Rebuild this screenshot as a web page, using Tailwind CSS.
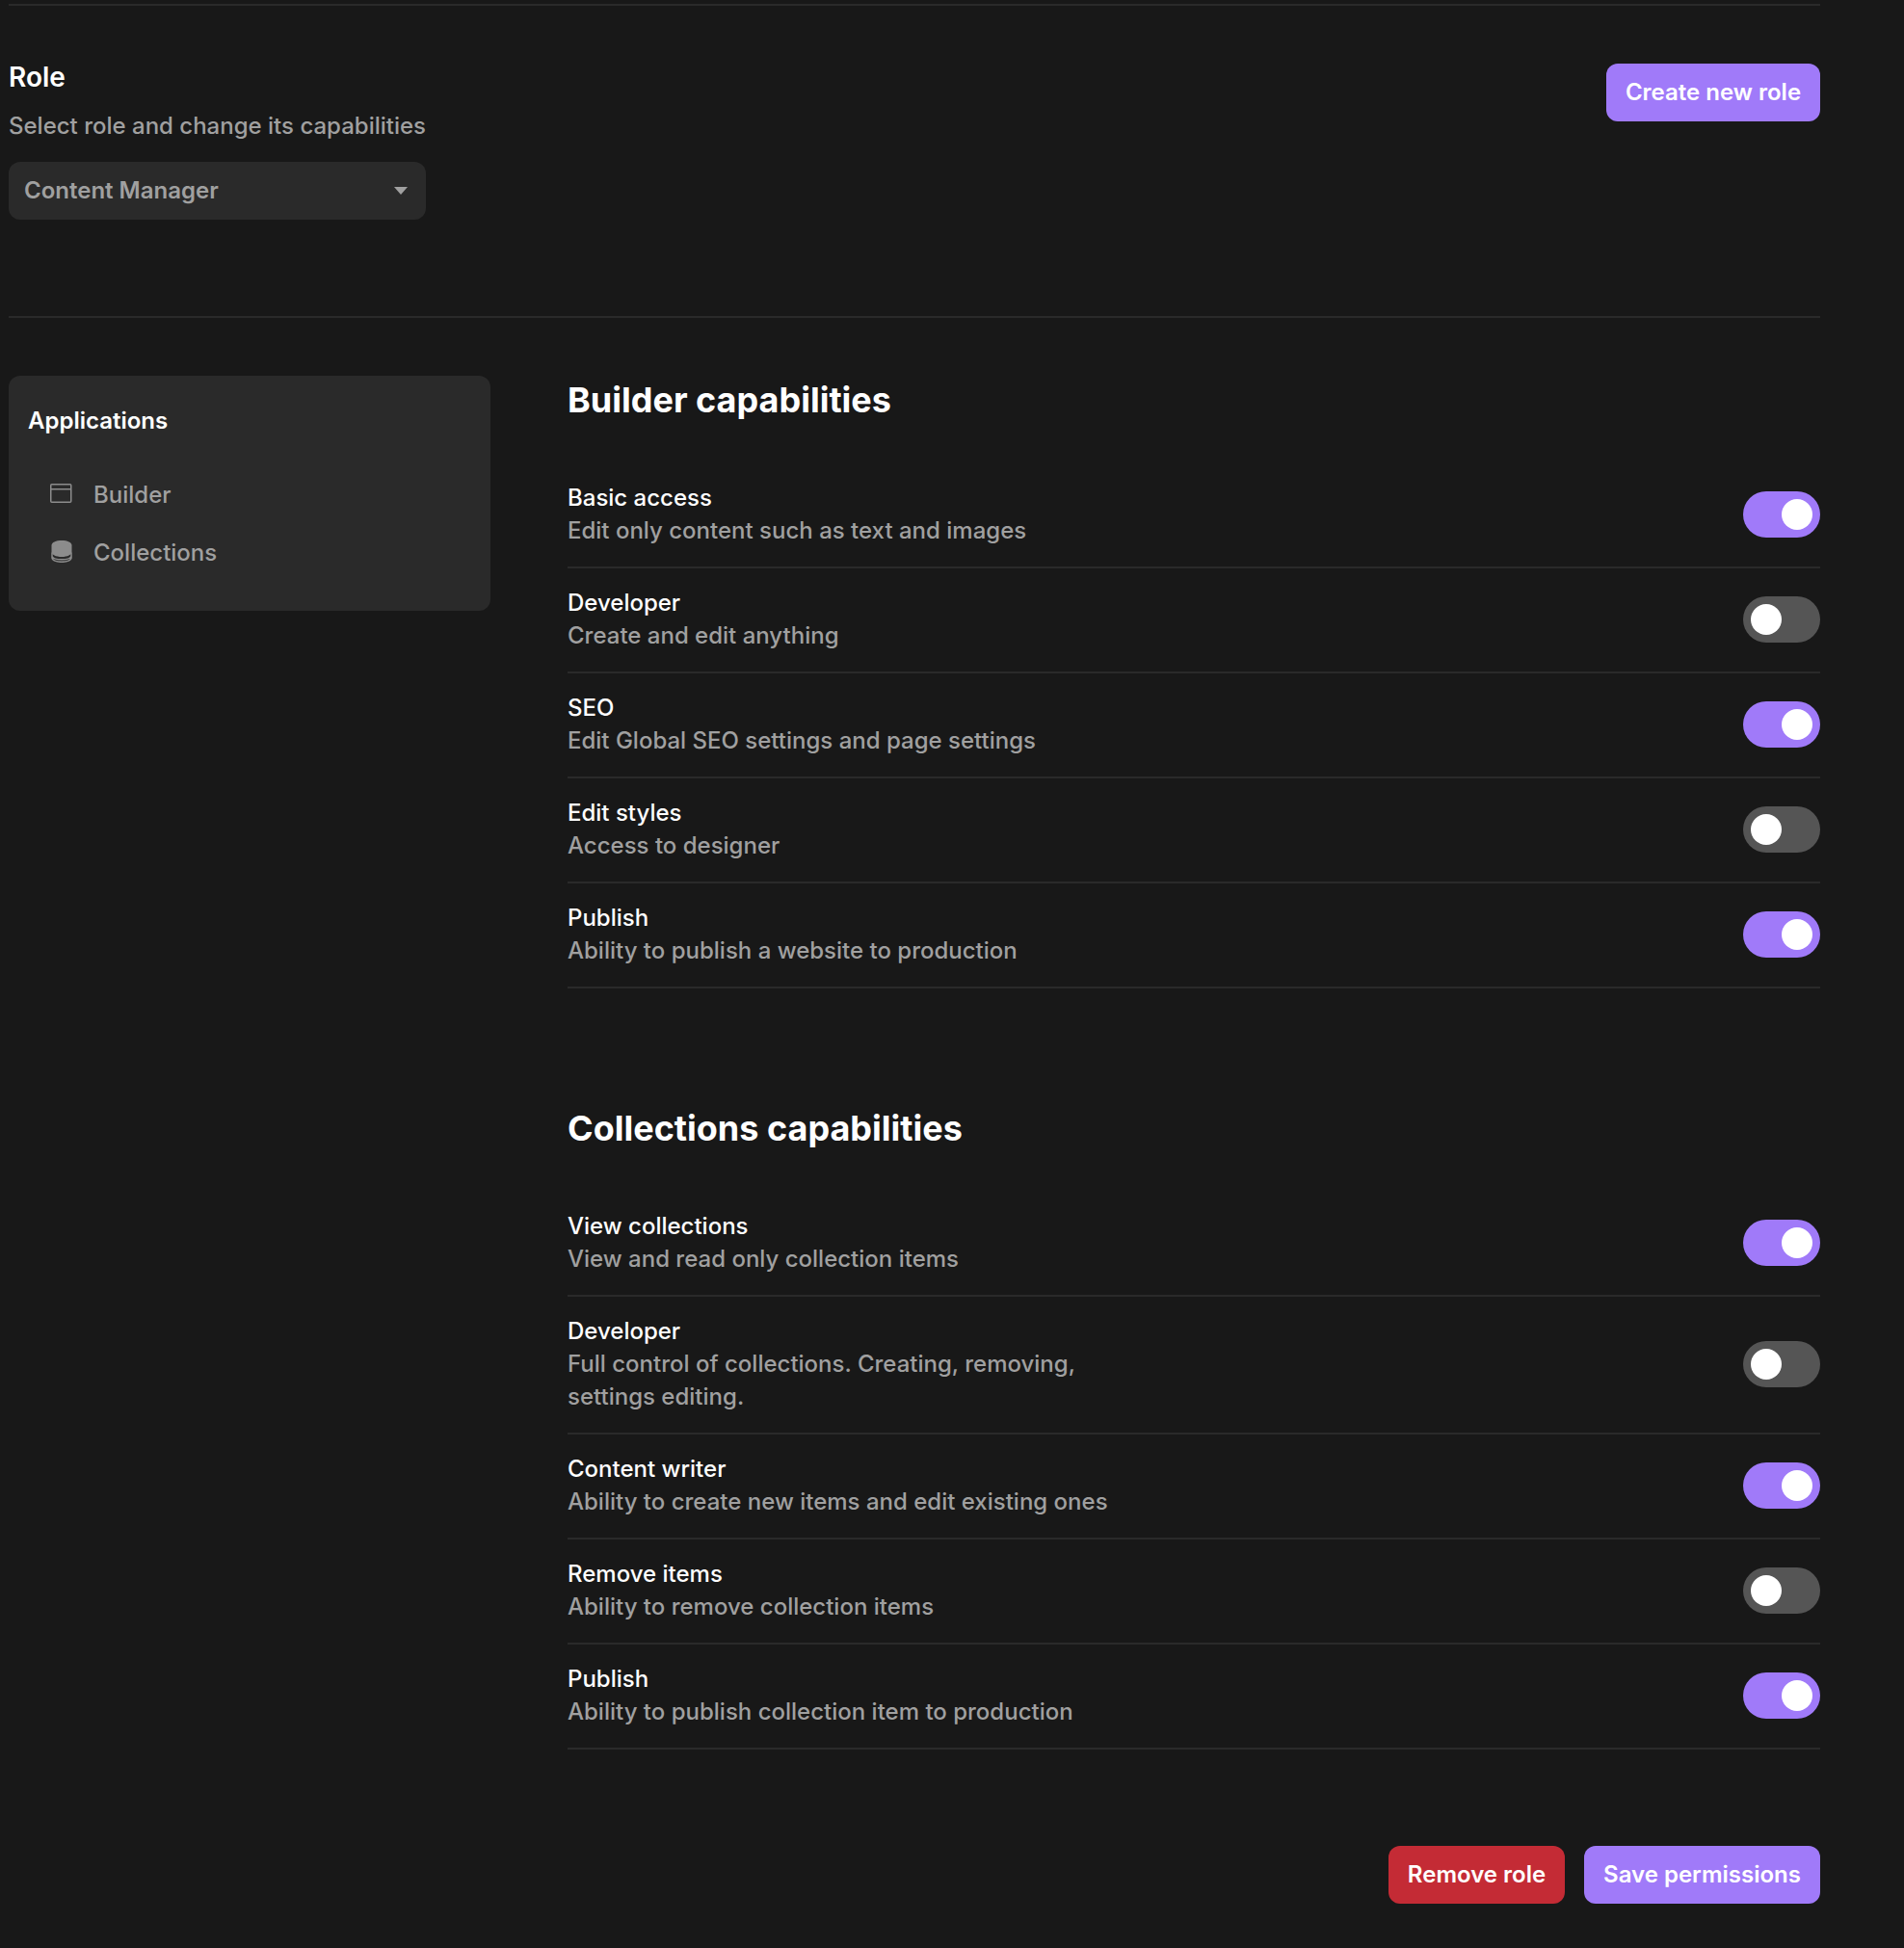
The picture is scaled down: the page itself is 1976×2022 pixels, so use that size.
<!DOCTYPE html>
<html lang="en">
<head>
<meta charset="UTF-8">
<title>Role capabilities</title>
<script src="https://cdn.jsdelivr.net/npm/@tailwindcss/browser@4"></script>
</head>
<body class="bg-[#181818] font-['Inter',sans-serif] text-white w-[1976px] h-[2022px] overflow-hidden">
<div class="w-[1880px] ml-[9px] pt-[4px]">
  <div class="border-t-2 border-b-2 border-[#2a2a2a] flex justify-between h-[326px]">
    <div class="pt-[54px]">
      <h2 class="text-[28px] leading-[40px] font-semibold">Role</h2>
      <p class="text-[24px] leading-[34px] mt-[14px] text-[#a0a0a0] font-medium">Select role and change its capabilities</p>
      <div class="mt-[20px] w-[433px] h-[60px] bg-[#2a2a2a] rounded-[12px] flex items-center justify-between pl-4 pr-[19px] text-[24px] font-semibold text-[#a0a0a0]">
        <span>Content Manager</span>
        <span class="w-0 h-0 border-x-[7px] border-x-transparent border-t-[8px] border-t-[#a0a0a0]"></span>
      </div>
    </div>
    <button class="mt-[60px] h-[60px] w-[222px] rounded-[12px] bg-[#a07af9] text-[24px] font-semibold text-white">Create new role</button>
  </div>
  <div class="flex mt-[60px]">
    <aside class="w-[500px] h-[244px] bg-[#2a2a2a] rounded-[12px] px-5 pt-[30px] shrink-0">
      <h3 class="text-[24px] leading-[34px] font-semibold">Applications</h3>
      <div class="mt-[43px] flex flex-col gap-[26px] pl-[22px] text-[24px] font-medium text-[#a0a0a0]">
        <div class="flex items-center gap-[20px] h-[34px]">
          <svg class="mt-[-6px]" width="26" height="26" viewBox="0 0 26 26" fill="none" stroke="#8c8c8c" stroke-width="1.5"><rect x="1.750" y="4.750" width="21" height="18.500" rx="1"/><path d="M1.750 9.750h21"/></svg>
          <span>Builder</span>
        </div>
        <div class="flex items-center gap-[20px] h-[34px]">
          <svg class="mt-[-6px]" width="26" height="26" viewBox="0 0 26 26" fill="none"><g transform="translate(0 1)"><path fill="#8c8c8c" d="M2.500 7C2.500 4 7 2 13 2s10.500 2 10.500 5v7c0 2.800-4.500 5-10.500 5S2.500 16.800 2.500 14z"/><path stroke="#8c8c8c" stroke-width="1.500" d="M3 14.500V20c0 2.500 4.500 4.300 10 4.300s10-1.800 10-4.300v-5.500M3 18.500c1 2.200 5 3.300 10 3.300s9-1.100 10-3.300"/></g></svg>
          <span>Collections</span>
        </div>
      </div>
    </aside>
    <main class="ml-[80px] flex-1">
      <h2 class="text-[36px] leading-[50px] font-bold">Builder capabilities</h2>
      <div class="mt-[41px]">
        <div class="flex items-center justify-between h-[109px] pb-px border-b-2 border-[#2a2a2a]">
          <div><p class="text-[24px] leading-[34px] font-medium">Basic access</p><p class="text-[24px] leading-[34px] font-medium text-[#a0a0a0]">Edit only content such as text and images</p></div>
          <div class="w-[80px] h-[48px] rounded-full bg-[#a07af9] flex items-center justify-end px-[8px]"><span class="w-[32px] h-[32px] rounded-full bg-white"></span></div>
        </div>
        <div class="flex items-center justify-between h-[109px] pb-px border-b-2 border-[#2a2a2a]">
          <div><p class="text-[24px] leading-[34px] font-medium">Developer</p><p class="text-[24px] leading-[34px] font-medium text-[#a0a0a0]">Create and edit anything</p></div>
          <div class="w-[80px] h-[48px] rounded-full bg-[#555555] flex items-center px-[8px]"><span class="w-[32px] h-[32px] rounded-full bg-white"></span></div>
        </div>
        <div class="flex items-center justify-between h-[109px] pb-px border-b-2 border-[#2a2a2a]">
          <div><p class="text-[24px] leading-[34px] font-medium">SEO</p><p class="text-[24px] leading-[34px] font-medium text-[#a0a0a0]">Edit Global SEO settings and page settings</p></div>
          <div class="w-[80px] h-[48px] rounded-full bg-[#a07af9] flex items-center justify-end px-[8px]"><span class="w-[32px] h-[32px] rounded-full bg-white"></span></div>
        </div>
        <div class="flex items-center justify-between h-[109px] pb-px border-b-2 border-[#2a2a2a]">
          <div><p class="text-[24px] leading-[34px] font-medium">Edit styles</p><p class="text-[24px] leading-[34px] font-medium text-[#a0a0a0]">Access to designer</p></div>
          <div class="w-[80px] h-[48px] rounded-full bg-[#555555] flex items-center px-[8px]"><span class="w-[32px] h-[32px] rounded-full bg-white"></span></div>
        </div>
        <div class="flex items-center justify-between h-[109px] pb-px border-b-2 border-[#2a2a2a]">
          <div><p class="text-[24px] leading-[34px] font-medium">Publish</p><p class="text-[24px] leading-[34px] font-medium text-[#a0a0a0]">Ability to publish a website to production</p></div>
          <div class="w-[80px] h-[48px] rounded-full bg-[#a07af9] flex items-center justify-end px-[8px]"><span class="w-[32px] h-[32px] rounded-full bg-white"></span></div>
        </div>
      </div>
      <h2 class="text-[36px] leading-[50px] font-bold mt-[120px]">Collections capabilities</h2>
      <div class="mt-[41px]">
        <div class="flex items-center justify-between h-[109px] pb-px border-b-2 border-[#2a2a2a]">
          <div><p class="text-[24px] leading-[34px] font-medium">View collections</p><p class="text-[24px] leading-[34px] font-medium text-[#a0a0a0]">View and read only collection items</p></div>
          <div class="w-[80px] h-[48px] rounded-full bg-[#a07af9] flex items-center justify-end px-[8px]"><span class="w-[32px] h-[32px] rounded-full bg-white"></span></div>
        </div>
        <div class="flex items-center justify-between h-[143px] pb-px border-b-2 border-[#2a2a2a]">
          <div class="w-[600px]"><p class="text-[24px] leading-[34px] font-medium">Developer</p><p class="text-[24px] leading-[34px] font-medium text-[#a0a0a0]">Full control of collections. Creating, removing, settings editing.</p></div>
          <div class="w-[80px] h-[48px] rounded-full bg-[#555555] flex items-center px-[8px]"><span class="w-[32px] h-[32px] rounded-full bg-white"></span></div>
        </div>
        <div class="flex items-center justify-between h-[109px] pb-px border-b-2 border-[#2a2a2a]">
          <div><p class="text-[24px] leading-[34px] font-medium">Content writer</p><p class="text-[24px] leading-[34px] font-medium text-[#a0a0a0]">Ability to create new items and edit existing ones</p></div>
          <div class="w-[80px] h-[48px] rounded-full bg-[#a07af9] flex items-center justify-end px-[8px]"><span class="w-[32px] h-[32px] rounded-full bg-white"></span></div>
        </div>
        <div class="flex items-center justify-between h-[109px] pb-px border-b-2 border-[#2a2a2a]">
          <div><p class="text-[24px] leading-[34px] font-medium">Remove items</p><p class="text-[24px] leading-[34px] font-medium text-[#a0a0a0]">Ability to remove collection items</p></div>
          <div class="w-[80px] h-[48px] rounded-full bg-[#555555] flex items-center px-[8px]"><span class="w-[32px] h-[32px] rounded-full bg-white"></span></div>
        </div>
        <div class="flex items-center justify-between h-[109px] pb-px border-b-2 border-[#2a2a2a]">
          <div><p class="text-[24px] leading-[34px] font-medium">Publish</p><p class="text-[24px] leading-[34px] font-medium text-[#a0a0a0]">Ability to publish collection item to production</p></div>
          <div class="w-[80px] h-[48px] rounded-full bg-[#a07af9] flex items-center justify-end px-[8px]"><span class="w-[32px] h-[32px] rounded-full bg-white"></span></div>
        </div>
      </div>
      <div class="flex justify-end gap-5 mt-[100px]">
        <button class="h-[60px] w-[183px] rounded-[12px] bg-[#c42b35] text-[24px] font-semibold text-white">Remove role</button>
        <button class="h-[60px] w-[245px] rounded-[12px] bg-[#a07af9] text-[24px] font-semibold text-white">Save permissions</button>
      </div>
    </main>
  </div>
</div>
</body>
</html>
